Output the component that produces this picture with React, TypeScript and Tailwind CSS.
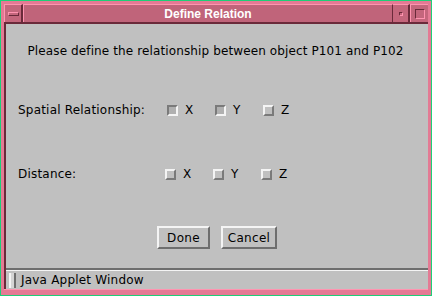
const font = { fontFamily: '"DejaVu Sans", "Liberation Sans", sans-serif' };

const Check = ({ on, label }: { on?: boolean; label: string }) => (
    <div className="flex w-[48px] items-center">
        <div
            className={
                on
                    ? "h-[11px] w-[11px] border-2 border-t-[#7a7a7a] border-l-[#7a7a7a] border-b-[#f4f4f4] border-r-[#f4f4f4] bg-[#b0b0b0]"
                    : "h-[11px] w-[11px] border-2 border-t-[#f4f4f4] border-l-[#f4f4f4] border-b-[#7a7a7a] border-r-[#7a7a7a] bg-[#c0c0c0]"
            }
        />
        <span className="ml-[7px] text-[12px] leading-none text-black">{label}</span>
    </div>
);

const Btn = ({ label, w }: { label: string; w: string }) => (
    <button
        className={`${w} h-[23px] border-2 border-t-[#f4f4f4] border-l-[#f4f4f4] border-b-[#6e6e6e] border-r-[#6e6e6e] bg-[#c0c0c0] text-[12px] tracking-[0.3px] text-black`}
    >
        {label}
    </button>
);

export default function App() {
    return (
        <div
            style={font}
            className="flex h-[296px] w-[432px] flex-col border border-[#1ecf78] bg-[#e47a94]"
        >
            {/* title bar */}
            <div className="mx-[3px] mt-[3px] flex h-[20px] border-b-2 border-[#6a2a3a]">
                <div className="flex w-[19px] items-center justify-center border-t border-l border-[#ff94b0] border-r-2 border-r-[#6a2a3a] bg-[#c4667c]">
                    <div className="h-[4px] w-[11px] border border-t-[#ff94b0] border-l-[#ff94b0] border-b-[#6a2a3a] border-r-[#6a2a3a]" />
                </div>
                <div
                    style={{ fontFamily: '"Liberation Sans", Arial, sans-serif' }}
                    className="flex flex-1 items-center justify-center border-t border-l border-[#ff94b0] bg-[#c0647a] text-[12px] font-bold text-white"
                >
                    Define Relation
                </div>
                <div className="flex w-[18px] items-center justify-center border-t border-l border-[#ff94b0] border-x-2 border-x-[#6a2a3a] bg-[#c4667c]">
                    <div className="h-[4px] w-[4px] border border-t-[#6a2a3a] border-l-[#6a2a3a] border-b-[#ff94b0] border-r-[#ff94b0]" />
                </div>
                <div className="flex w-[18px] items-center justify-center border-t border-l border-[#ff94b0] bg-[#c4667c]">
                    <div className="h-[10px] w-[10px] border border-t-[#6a2a3a] border-l-[#6a2a3a] border-b-[#ff94b0] border-r-[#ff94b0]" />
                </div>
            </div>
            {/* content */}
            <div className="mx-[3px] flex flex-1 flex-col border-l-2 border-[#6a2a3a] bg-[#c0c0c0]">
                <div className="flex flex-1 flex-col border-b-2 border-b-[#6e6e6e]">
                    <p className="mt-[18px] pr-[3px] text-center text-[12px] tracking-[0.12px] text-black">
                        Please define the relationship between object P101 and P102
                    </p>
                    <div className="mt-[41px] flex items-center text-[12px] tracking-[0.2px]">
                        <span className="ml-[12px] w-[149px]">Spatial Relationship:</span>
                        <div className="flex">
                            <Check on label="X" />
                            <Check on label="Y" />
                            <Check label="Z" />
                        </div>
                    </div>
                    <div className="mt-[46px] flex items-center text-[12px] tracking-[0.2px]">
                        <span className="ml-[12px] w-[147px]">Distance:</span>
                        <div className="flex">
                            <Check label="X" />
                            <Check label="Y" />
                            <Check label="Z" />
                        </div>
                    </div>
                    <div className="mt-[43px] flex justify-center gap-[11px]">
                        <Btn label="Done" w="w-[53px]" />
                        <Btn label="Cancel" w="w-[56px]" />
                    </div>
                </div>
                {/* status bar */}
                <div className="flex h-[19px] items-center border-t border-[#f4f4f4]">
                    <div className="ml-[3px] h-[15px] w-[7px] border-l-2 border-l-[#f4f4f4] border-r-2 border-r-[#6e6e6e] bg-[#d4d4d4]" />
                    <span className="ml-[5px] text-[12px] tracking-[0.2px] text-black">Java Applet Window</span>
                </div>
            </div>
            <div className="mx-[3px] mb-[3px] h-[3px] border-t border-[#ff94b0]" />
        </div>
    );
}
